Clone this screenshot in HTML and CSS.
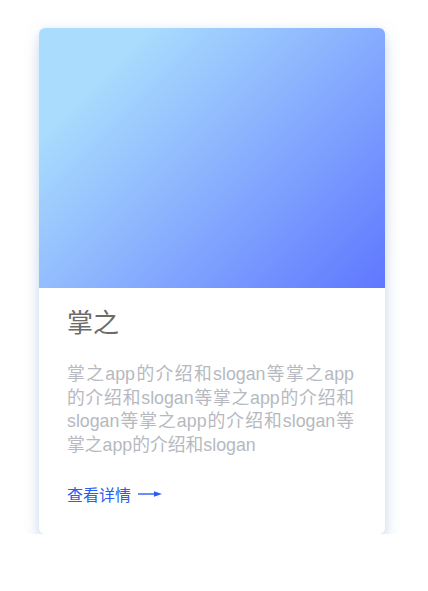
FILE: index.html
```html
<!DOCTYPE html>
<html lang="zh">
<head>
<meta charset="utf-8">
<link rel="stylesheet" href="styles.css">
</head>
<body>
<div class="page">
  <div class="card">
    <div class="cover"></div>
    <div class="content">
      <h2 class="title">掌之</h2>
      <p class="desc">掌之app的介绍和slogan等掌之app的介绍和slogan等掌之app的介绍和slogan等掌之app的介绍和slogan等掌之app的介绍和slogan</p>
      <a class="more" href="#">查看详情<svg class="arrow" width="26" height="10" viewBox="0 0 26 10"><line x1="1" y1="5" x2="19" y2="5" stroke="#2b5cf0" stroke-width="1.4"/><path d="M17 2.3 L25 5 L17 7.7 Z" fill="#2b5cf0"/></svg></a>
    </div>
  </div>
</div>
</body>
</html>
```

FILE: styles.css
```css
html, body {
  margin: 0;
  padding: 0;
  background: #ffffff;
}
.page {
  padding: 28px 0 0 39px;
  font-family: "Liberation Sans", "Noto Sans CJK SC", sans-serif;
}
.card {
  width: 346px;
  background: #ffffff;
  border-radius: 6px;
  overflow: hidden;
  box-shadow: 0 10px 16px rgba(176, 196, 222, 0.55), 0 0 8px rgba(215, 228, 245, 0.55);
}
.cover {
  height: 260px;
  background: linear-gradient(135deg, #a9dcfd 18%, #5f77ff 100%);
}
.content {
  padding: 15px 31px 29px 28px;
}
.title {
  margin: 0;
  font-family: "Noto Sans CJK SC", sans-serif;
  font-size: 26px;
  line-height: 36px;
  font-weight: 400;
  color: #6b6b6b;
}
.desc {
  margin: 24px 0 0 0;
  font-size: 17.8px;
  line-height: 23.7px;
  color: #b6b9c0;
  text-align: justify;
}
.more {
  display: flex;
  align-items: center;
  margin-top: 25px;
  font-family: "Noto Sans CJK SC", sans-serif;
  font-size: 16px;
  line-height: 22px;
  color: #2b5cf0;
  text-decoration: none;
}
.arrow {
  margin-left: 6px;
}
```
